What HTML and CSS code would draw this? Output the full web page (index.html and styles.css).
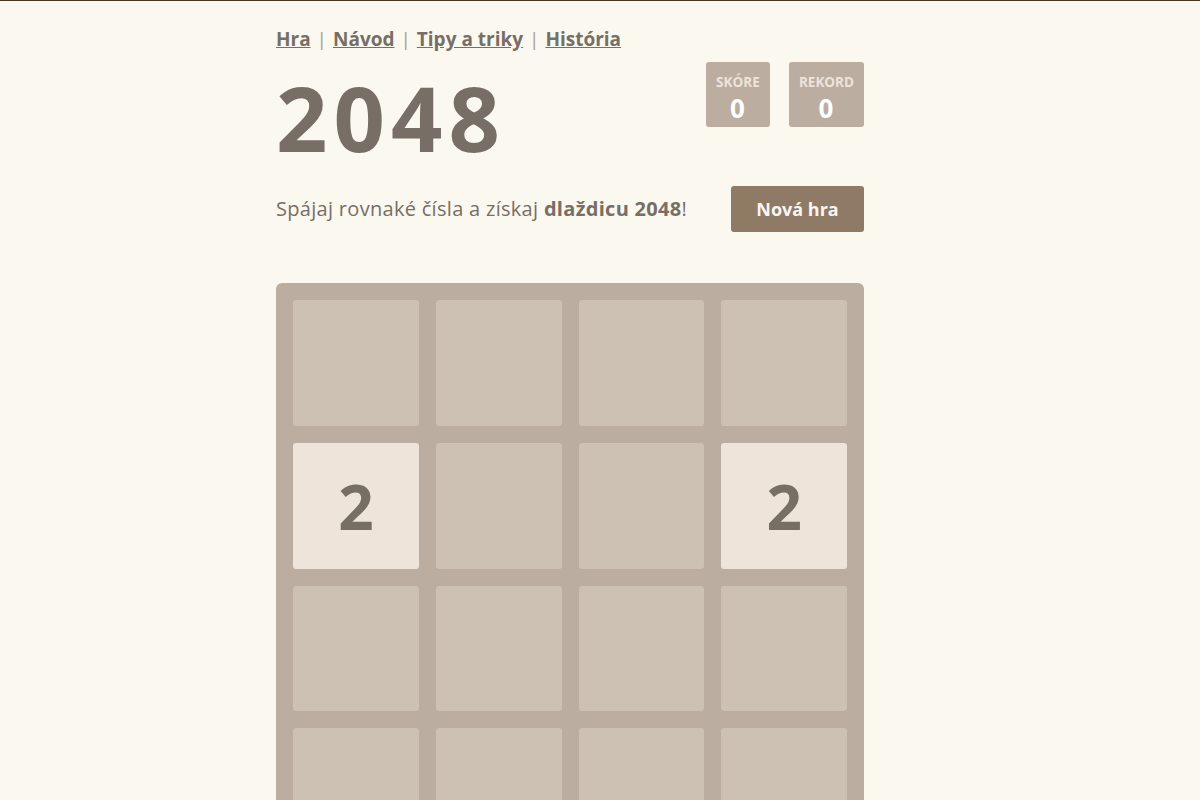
FILE: index.html
```html
<!DOCTYPE html>
<html lang="sk">
<head>
  <meta charset="UTF-8">
  <meta name="viewport" content="width=device-width, initial-scale=1.0">
  <title>2048</title>
  <link rel="stylesheet" href="styles.css">
</head>
<body>

  <div class="container">
    <nav class="menu">
      <a href="#">Hra</a> <span class="sep">|</span>
      <a href="#">Návod</a> <span class="sep">|</span>
      <a href="#">Tipy a triky</a> <span class="sep">|</span>
      <a href="#">História</a>
    </nav>

    <div class="heading">
      <h1 class="title">2048</h1>
      <div class="scores">
        <div class="score-box">
          <div class="score-label">SKÓRE</div>
          <div class="score-value">0</div>
        </div>
        <div class="score-box">
          <div class="score-label">REKORD</div>
          <div class="score-value">0</div>
        </div>
      </div>
    </div>

    <div class="intro">
      <p class="tagline">Spájaj rovnaké čísla a získaj <strong>dlaždicu 2048</strong>!</p>
      <button class="new-game">Nová hra</button>
    </div>

    <div class="board">
      <div class="cell"></div>
      <div class="cell"></div>
      <div class="cell"></div>
      <div class="cell"></div>

      <div class="cell tile-2">2</div>
      <div class="cell"></div>
      <div class="cell"></div>
      <div class="cell tile-2">2</div>

      <div class="cell"></div>
      <div class="cell"></div>
      <div class="cell"></div>
      <div class="cell"></div>

      <div class="cell"></div>
      <div class="cell"></div>
      <div class="cell"></div>
      <div class="cell"></div>
    </div>
  </div>

</body>
</html>
```

FILE: styles.css
```css
body {
  margin: 0;
  background-color: #faf8ef;
  border-top: 1px solid #46391f;
  font-family: 'Open Sans', sans-serif;
  color: #776e65;
}

.container {
  width: 588px;
  margin-left: 276px;
  padding-top: 26px;
}

.menu {
  font-size: 19px;
  line-height: 24px;
  font-weight: bold;
}

.menu a {
  color: #776e65;
  text-decoration: underline;
}

.sep {
  font-weight: normal;
  color: #a89d92;
  margin: 0 1px;
}

.heading {
  display: flex;
  justify-content: space-between;
  align-items: flex-start;
  margin-top: 11px;
}

.title {
  margin: 10px 0 0 0;
  font-size: 90px;
  line-height: 90px;
  font-weight: bold;
  letter-spacing: 6px;
  color: #776e65;
}

.scores {
  display: flex;
  gap: 19px;
}

.score-box {
  background: #bbada0;
  border-radius: 3px;
  height: 65px;
  box-sizing: border-box;
  padding: 12px 10px 0;
  text-align: center;
  min-width: 64px;
}

.score-label {
  font-size: 13.5px;
  line-height: 16px;
  font-weight: bold;
  color: #eee4da;
}

.score-value {
  margin-top: 5px;
  font-size: 26px;
  line-height: 27px;
  font-weight: bold;
  letter-spacing: 1px;
  color: #fff;
}

.intro {
  display: flex;
  justify-content: space-between;
  align-items: center;
  margin-top: 24px;
}

.tagline {
  margin: 0;
  font-size: 20px;
  line-height: 26px;
  letter-spacing: 0.3px;
}

.new-game {
  background: #8f7a66;
  color: #f9f6f2;
  border: none;
  border-radius: 3px;
  height: 46px;
  width: 133px;
  font-family: 'Open Sans', sans-serif;
  font-size: 18px;
  font-weight: bold;
  cursor: pointer;
}

.board {
  margin-top: 51px;
  background: #bbada0;
  border-radius: 6px;
  padding: 17px;
  display: grid;
  grid-template-columns: repeat(4, 1fr);
  gap: 17px;
}

.cell {
  aspect-ratio: 1;
  border-radius: 3px;
  background: #cdc1b4;
  display: flex;
  align-items: center;
  justify-content: center;
  font-size: 62px;
  font-weight: bold;
}

.tile-2 {
  background: #eee4da;
  color: #776e65;
}
```
